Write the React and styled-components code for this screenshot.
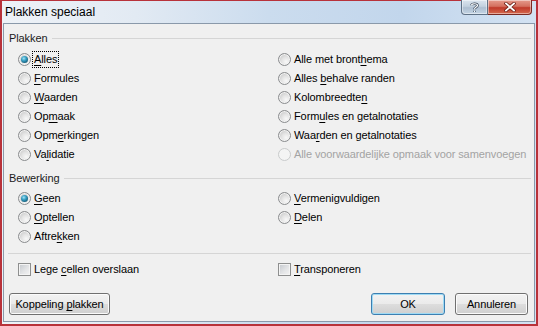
import React from "react";
import styled, { createGlobalStyle } from "styled-components";

const GlobalStyle = createGlobalStyle`
  html, body {
    margin: 0;
    padding: 0;
  }
  body {
    width: 538px;
    height: 326px;
    overflow: hidden;
    background: #ffffff;
    font-family: "Liberation Sans", Arial, sans-serif;
    font-size: 11px;
    letter-spacing: -0.1px;
    color: #000;
  }
`;

const Frame = styled.div`
  box-sizing: border-box;
  width: 538px;
  height: 326px;
  display: flex;
  flex-direction: column;
  border: solid #b8323a;
  border-width: 1px 2px 2px 2px;
  padding: 0 1px 2px 1px;
  background: linear-gradient(
    to right,
    #eef2f7 0%,
    #e2eaf3 25%,
    #cbdcee 50%,
    #c2d6ec 75%,
    #d3e2f2 100%
  );
`;

const TitleBar = styled.div`
  height: 22px;
  display: flex;
  align-items: flex-start;
  padding-left: 2px;
`;

const Title = styled.div`
  font-size: 12px;
  letter-spacing: 0;
  line-height: 22px;
  color: #000;
`;

const CaptionButtons = styled.div`
  margin-left: auto;
  margin-top: -1px;
  margin-right: 3px;
  display: flex;
`;

const CaptionButton = styled.div`
  box-sizing: border-box;
  height: 15px;
  width: ${(p) => (p.$close ? "44px" : "27px")};
  display: flex;
  align-items: center;
  justify-content: center;
  border: 1px solid ${(p) => (p.$close ? "#7a2a22" : "#5f7185")};
  border-top: none;
  border-left-width: ${(p) => (p.$close ? "0" : "1px")};
  border-radius: ${(p) => (p.$close ? "0 0 4px 0" : "0 0 0 4px")};
  background: ${(p) =>
    p.$close
      ? "linear-gradient(#e59a8c 0%, #d4705f 45%, #c0392a 55%, #d56b4f 100%)"
      : "linear-gradient(#dbe5ef 0%, #c3d1df 45%, #aebfd1 55%, #c4d4e4 100%)"};
  box-shadow: inset 0 0 0 1px rgba(255, 255, 255, 0.45);
`;

const Client = styled.div`
  flex: 1;
  display: flex;
  flex-direction: column;
  border: 1px solid #8a99aa;
  background: #f0f0f0;
  padding: 6px 3px 0 5px;
`;

const GroupHeader = styled.div`
  height: 16px;
  display: flex;
  align-items: center;
  margin-top: ${(p) => p.$top || 0}px;
  color: #1b1b1b;

  &::after {
    content: "";
    flex: 1;
    height: 1px;
    margin-left: 5px;
    background: #d5d5d5;
  }
`;

const Columns = styled.div`
  display: flex;
  padding-left: 9px;
  margin-top: ${(p) => p.$top || 0}px;
`;

const Column = styled.div`
  display: flex;
  flex-direction: column;
  flex: ${(p) => (p.$left ? "0 0 260px" : "1")};
  min-width: 0;
`;

const Row = styled.div`
  height: 19px;
  display: flex;
  align-items: center;
  gap: 3px;
  white-space: nowrap;
  color: ${(p) => (p.$disabled ? "#a3a3a3" : "#000")};
`;

const RadioDot = styled.span`
  box-sizing: border-box;
  position: relative;
  width: 13px;
  height: 13px;
  flex: 0 0 13px;
  border-radius: 50%;
  border: 1px solid ${(p) => (p.$disabled ? "#c9cbcc" : "#8a8c8e")};
  background: ${(p) =>
    p.$disabled
      ? "#f4f4f4"
      : "radial-gradient(circle at 65% 70%, #f8f8f8 0%, #e4e4e4 40%, #c6c6c6 85%, #b4b4b4 100%)"};
  box-shadow: inset 0 0 0 1px ${(p) => (p.$disabled ? "#f4f4f4" : "#f3f3f3")};

  &::after {
    content: "";
    display: ${(p) => (p.$checked ? "block" : "none")};
    position: absolute;
    left: 2px;
    top: 2px;
    width: 7px;
    height: 7px;
    border-radius: 50%;
    background: radial-gradient(
      circle at 40% 35%,
      #a6e3f5 0%,
      #3aa2c6 35%,
      #17607d 75%,
      #0f4a61 100%
    );
  }
`;

const CheckBox = styled.span`
  box-sizing: border-box;
  width: 13px;
  height: 13px;
  flex: 0 0 13px;
  border: 1px solid #8e8f8f;
  background: linear-gradient(135deg, #c4c8cd 0%, #e3e4e6 55%, #f4f4f4 100%);
  box-shadow: inset 0 0 0 1px #f4f4f4;
`;

const Label = styled.span`
  line-height: 15px;
  padding: 0 1px;
  border: 1px ${(p) => (p.$focus ? "dotted #000" : "solid transparent")};
  margin-left: -2px;

  u {
    text-decoration: underline;
    text-underline-offset: 2px;
  }
`;

const Separator = styled.div`
  height: 1px;
  background: #d5d5d5;
  margin: 7px 0 0 -1px;
`;

const ButtonRow = styled.div`
  display: flex;
  align-items: center;
  margin-top: 14px;
  margin-right: 3px;
`;

const Button = styled.button`
  box-sizing: border-box;
  height: 22px;
  width: ${(p) => p.$width}px;
  margin-left: ${(p) => p.$gap || 0}px;
  padding: 0;
  font-family: inherit;
  font-size: 11px;
  letter-spacing: -0.1px;
  color: #000;
  border: 1px solid ${(p) => (p.$default ? "#3c7fb1" : "#707070")};
  border-radius: 3px;
  background: linear-gradient(
    #f2f2f2 0%,
    #ebebeb 48%,
    #dddddd 52%,
    #cfcfcf 100%
  );
  box-shadow: inset 0 0 0 1px ${(p) => (p.$default ? "#9fdaf4" : "#fbfbfb")};

  u {
    text-underline-offset: 2px;
  }
`;

const Spacer = styled.div`
  flex: 1;
`;

function Radio({ checked, disabled, focus, children }) {
  return (
    <Row $disabled={disabled}>
      <RadioDot $checked={checked} $disabled={disabled} />
      <Label $focus={focus}>{children}</Label>
    </Row>
  );
}

function Check({ children }) {
  return (
    <Row>
      <CheckBox />
      <Label>{children}</Label>
    </Row>
  );
}

export default function App() {
  return (
    <>
      <GlobalStyle />
      <Frame>
        <TitleBar>
          <Title>Plakken speciaal</Title>
          <CaptionButtons>
            <CaptionButton>
              <svg width="9" height="11" viewBox="0 0 9 11">
                <path
                  d="M1.5 3.2 C1.5 1.2 7.5 1.2 7.5 3.5 C7.5 5.2 4.5 5 4.5 7.2 M4.5 8.8 V10"
                  stroke="#3c4c5e"
                  strokeWidth="2.6"
                  fill="none"
                />
                <path
                  d="M1.5 3.2 C1.5 1.2 7.5 1.2 7.5 3.5 C7.5 5.2 4.5 5 4.5 7.2 M4.5 8.8 V10"
                  stroke="#ffffff"
                  strokeWidth="1.2"
                  fill="none"
                />
              </svg>
            </CaptionButton>
            <CaptionButton $close>
              <svg width="12" height="10" viewBox="0 0 12 10">
                <path
                  d="M2 1.5 L10 8.5 M10 1.5 L2 8.5"
                  stroke="#6a1d14"
                  strokeWidth="3.4"
                  strokeLinecap="square"
                />
                <path
                  d="M2 1.5 L10 8.5 M10 1.5 L2 8.5"
                  stroke="#ffffff"
                  strokeWidth="1.8"
                  strokeLinecap="square"
                />
              </svg>
            </CaptionButton>
          </CaptionButtons>
        </TitleBar>
        <Client>
          <GroupHeader>Plakken</GroupHeader>
          <Columns $top={4}>
            <Column $left>
              <Radio checked focus>
                <u>A</u>lles
              </Radio>
              <Radio>
                <u>F</u>ormules
              </Radio>
              <Radio>
                <u>W</u>aarden
              </Radio>
              <Radio>
                Op<u>m</u>aak
              </Radio>
              <Radio>
                Opm<u>e</u>rkingen
              </Radio>
              <Radio>
                Va<u>l</u>idatie
              </Radio>
            </Column>
            <Column>
              <Radio>
                Alle met bront<u>h</u>ema
              </Radio>
              <Radio>
                Alles <u>b</u>ehalve randen
              </Radio>
              <Radio>
                Kolombreedte<u>n</u>
              </Radio>
              <Radio>
                Form<u>u</u>les en getalnotaties
              </Radio>
              <Radio>
                Waa<u>r</u>den en getalnotaties
              </Radio>
              <Radio disabled>Alle voorwaardelijke opmaak voor samenvoegen</Radio>
            </Column>
          </Columns>
          <GroupHeader $top={6}>Bewerking</GroupHeader>
          <Columns $top={3}>
            <Column $left>
              <Radio checked>
                <u>G</u>een
              </Radio>
              <Radio>
                <u>O</u>ptellen
              </Radio>
              <Radio>
                Aftre<u>k</u>ken
              </Radio>
            </Column>
            <Column>
              <Radio>
                <u>V</u>ermenigvuldigen
              </Radio>
              <Radio>
                <u>D</u>elen
              </Radio>
            </Column>
          </Columns>
          <Separator />
          <Columns $top={6}>
            <Column $left>
              <Check>
                Lege <u>c</u>ellen overslaan
              </Check>
            </Column>
            <Column>
              <Check>
                <u>T</u>ransponeren
              </Check>
            </Column>
          </Columns>
          <ButtonRow>
            <Button $width={101}>
              Koppeling <u>p</u>lakken
            </Button>
            <Spacer />
            <Button $width={74} $default>
              OK
            </Button>
            <Button $width={73} $gap={10}>
              Annuleren
            </Button>
          </ButtonRow>
        </Client>
      </Frame>
    </>
  );
}
